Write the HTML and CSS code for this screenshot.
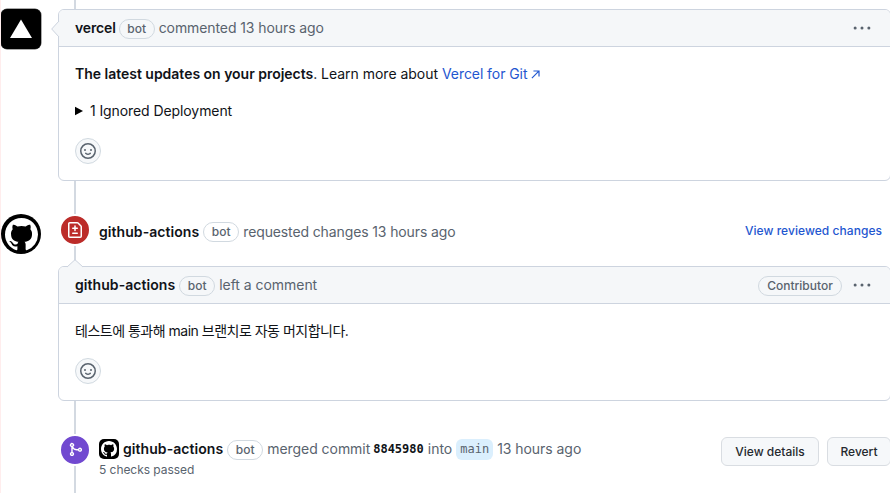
FILE: index.html
```html
<!DOCTYPE html>
<html lang="ko">
<head>
<meta charset="utf-8">
<title>Pull request timeline</title>
<link rel="stylesheet" href="styles.css">
</head>
<body>
<svg width="0" height="0" class="defs" aria-hidden="true">
  <symbol id="cat" viewBox="0 0 16 16"><path d="M8 0C3.58 0 0 3.58 0 8c0 3.54 2.29 6.53 5.47 7.59.4.07.55-.17.55-.38 0-.19-.01-.82-.01-1.49-2.01.37-2.53-.49-2.69-.94-.09-.23-.48-.94-.82-1.13-.28-.15-.68-.52-.01-.53.63-.01 1.08.58 1.23.82.72 1.21 1.87.87 2.33.66.07-.52.28-.87.51-1.07-1.78-.2-3.64-.89-3.64-3.95 0-.87.31-1.59.82-2.15-.08-.2-.36-1.02.08-2.12 0 0 .67-.21 2.2.82.64-.18 1.32-.27 2-.27s1.36.09 2 .27c1.53-1.04 2.2-.82 2.2-.82.44 1.1.16 1.92.08 2.12.51.56.82 1.27.82 2.15 0 3.07-1.87 3.75-3.65 3.95.29.25.54.73.54 1.48 0 1.07-.01 1.93-.01 2.2 0 .21.15.46.55.38A8.01 8.01 0 0 0 16 8c0-4.42-3.58-8-8-8z"/></symbol>
  <symbol id="smiley" viewBox="0 0 16 16"><path d="M8 0a8 8 0 1 1 0 16A8 8 0 0 1 8 0ZM1.5 8a6.5 6.5 0 1 0 13 0 6.5 6.5 0 0 0-13 0Zm3.82 1.636a.75.75 0 0 1 1.038.175l.007.009c.103.118.22.222.35.31.264.178.683.37 1.285.37.602 0 1.02-.192 1.285-.371.13-.088.247-.192.35-.31l.007-.008a.75.75 0 0 1 1.222.87l-.022-.015c.02.013.021.015.021.015v.001l-.001.002-.002.003-.005.007-.014.019a2.066 2.066 0 0 1-.184.213c-.16.166-.338.316-.53.445-.63.418-1.37.638-2.127.629-.946 0-1.652-.308-2.126-.63a3.331 3.331 0 0 1-.715-.657l-.014-.02-.005-.006-.002-.003v-.002h-.001l.613-.432-.614.43a.75.75 0 0 1 .183-1.044ZM12 7a1 1 0 1 1-2 0 1 1 0 0 1 2 0ZM5 8a1 1 0 1 1 0-2 1 1 0 0 1 0 2Z"/></symbol>
  <symbol id="dots" viewBox="0 0 16 16"><circle cx="1.9" cy="8" r="1.35"/><circle cx="8" cy="8" r="1.35"/><circle cx="14.1" cy="8" r="1.35"/></symbol>
</svg>
<main class="timeline">
  <section class="item">
    <span class="avatar vercel"><svg viewBox="0 0 40 40"><path d="M20 10.5 31 29H9Z" fill="#fff"/></svg></span>
    <article class="card first">
      <svg class="caret side" viewBox="0 0 8 16"><path d="M8 0 .7 8 8 16"/></svg>
      <header class="head"><b class="n-vercel">vercel</b><span class="label bot">bot</span><span class="muted t-commented">commented 13 hours ago</span><svg class="dots"><use href="#dots"/></svg></header>
      <div class="body">
        <p class="updates"><b>The latest updates on your projects</b>. Learn more about <a>Vercel for Git<svg class="arrow" viewBox="0 0 10 10"><path d="M1 9 8.7 1.3M2.7 1.1H8.9V7.3"/></svg></a></p>
        <p class="ignored"><svg class="tri" viewBox="0 0 8 10"><path d="M0 .8 8 5 0 9.2Z"/></svg><span>1 Ignored Deployment</span></p>
        <span class="react"><svg><use href="#smiley"/></svg></span>
      </div>
    </article>
  </section>
  <section class="event review">
    <span class="avatar round"><svg viewBox="0 0 16 16"><use href="#cat"/></svg></span>
    <span class="badge red"><svg viewBox="0 0 16 16"><path d="M1 1.75C1 .784 1.784 0 2.75 0h7.586c.464 0 .909.184 1.237.513l2.914 2.914c.329.328.513.773.513 1.237v9.586A1.75 1.75 0 0 1 13.25 16H2.75A1.75 1.75 0 0 1 1 14.25Zm1.75-.25a.25.25 0 0 0-.25.25v12.5c0 .138.112.25.25.25h10.5a.25.25 0 0 0 .25-.25V4.664a.25.25 0 0 0-.073-.177l-2.914-2.914a.25.25 0 0 0-.177-.073ZM8 3.25a.75.75 0 0 1 .75.75v1.5h1.5a.75.75 0 0 1 0 1.5h-1.5v1.5a.75.75 0 0 1-1.5 0V7h-1.5a.75.75 0 0 1 0-1.5h1.5V4A.75.75 0 0 1 8 3.25Zm-3 8a.75.75 0 0 1 .75-.75h4.5a.75.75 0 0 1 0 1.5h-4.5a.75.75 0 0 1-.75-.75Z"/></svg></span>
    <p class="line"><b class="n-gh">github-actions</b><span class="label bot">bot</span><span class="muted t-requested">requested changes 13 hours ago</span></p>
    <a class="viewlink">View reviewed changes</a>
  </section>
  <section class="item">
    <article class="card second">
      <svg class="caret up" viewBox="0 0 16 8"><path d="M0 8 8 .7 16 8"/></svg>
      <header class="head"><b class="n-gh">github-actions</b><span class="label bot">bot</span><span class="muted t-left">left a comment</span><span class="label contributor">Contributor</span><svg class="dots"><use href="#dots"/></svg></header>
      <div class="body">
        <p class="korean">테스트에 통과해 main 브랜치로 자동 머지합니다.</p>
        <span class="react"><svg><use href="#smiley"/></svg></span>
      </div>
    </article>
  </section>
  <section class="event merge">
    <span class="badge purple"><svg viewBox="0 0 16 16"><path d="M5.45 5.154A4.25 4.25 0 0 0 9.25 7.5h1.378a2.251 2.251 0 1 1 0 1.5H9.25A5.734 5.734 0 0 1 5 7.123v3.505a2.25 2.25 0 1 1-1.5 0V5.372a2.25 2.25 0 1 1 1.95-.218ZM4.25 13.5a.75.75 0 1 0 0-1.5.75.75 0 0 0 0 1.5Zm8.5-4.5a.75.75 0 1 0 0-1.5.75.75 0 0 0 0 1.5ZM5 3.25a.75.75 0 1 0 0 .005V3.25Z"/></svg></span>
    <div class="merged">
      <p class="line"><span class="mini"><svg viewBox="0 0 16 16"><use href="#cat"/></svg></span><b class="n-gh">github-actions</b><span class="label bot">bot</span><span class="muted t-merged">merged commit</span><code class="sha">8845980</code><span class="muted t-into">into</span><code class="branch">main</code><span class="muted t-ago">13 hours ago</span></p>
      <p class="checks">5 checks passed</p>
    </div>
    <div class="actions"><button class="details">View details</button><button class="revert">Revert</button></div>
  </section>
</main>
</body>
</html>
```

FILE: styles.css
```css
* { box-sizing: border-box; }
html, body { margin: 0; height: 493px; overflow: hidden; background: #fff; }
body { font: 14px/20px Inter, "Noto Sans CJK KR", sans-serif; color: #101318; }
p { margin: 0; }
b { font-weight: 600; }
a { color: #1f57d0; }
.defs { position: absolute; }

.timeline { position: relative; width: 891px; height: 493px; padding-top: 9px; border-left: 1px solid #ffeded; overflow: hidden; }
.timeline::before { content: ""; position: absolute; left: 73px; top: 0; width: 2px; height: 493px; background: #d3d9e1; }

.item { display: flex; position: relative; }
.avatar { flex: none; width: 40px; height: 40px; }
.avatar svg { display: block; width: 100%; height: 100%; }
.vercel { background: #000; border-radius: 6px; box-shadow: 0 0 0 .5px #555; }
.round { margin-top: 1px; padding: 3.5px; border-radius: 50%; background: #000; fill: #fff; }

.card { position: relative; flex: none; width: 833px; border: 1px solid #cdd4df; border-radius: 6px; background: #fff; }
.first { height: 172px; margin-left: 17px; }
.second { height: 135px; margin-left: 57px; }
.head { display: flex; align-items: center; height: 37px; padding: 0 19px 0 16px; background: #f5f7f9; border-bottom: 1px solid #cdd4df; border-radius: 5px 5px 0 0; }
.caret { position: absolute; fill: #f5f7f9; stroke: #cdd4df; stroke-width: 1; overflow: visible; }
.side { left: -8px; top: 11px; width: 8px; height: 16px; }
.up { left: 8px; top: -8px; width: 16px; height: 8px; }
.dots { width: 18px; height: 18px; margin: 0 0 1px auto; fill: #59636e; }

.muted { color: #59636e; white-space: nowrap; }
.label { flex: none; height: 20px; border: 1px solid #d1d9e0; border-radius: 10px; font-size: 12px; line-height: 18px; font-weight: 500; color: #59636e; text-align: center; }
.bot { width: 36px; margin: 1px 4px 0; }
.contributor { width: 84px; margin: 1px 11px 0 auto; }
.contributor + .dots { margin-left: 0; }

.n-vercel { letter-spacing: -.15px; }
.n-gh { letter-spacing: .06px; }
.t-commented { letter-spacing: -.09px; }
.t-requested { letter-spacing: -.12px; }
.t-left { letter-spacing: -.04px; }
.t-merged, .t-ago { letter-spacing: -.05px; }
.n-vercel + .bot { margin-left: 3px; }

.body { padding: 17px 16px 18px; }
.updates { letter-spacing: -.02px; white-space: nowrap; }
.updates a { letter-spacing: -.07px; }
.arrow { width: 9px; height: 9px; margin-left: 4px; fill: none; stroke: #1f57d0; stroke-width: 1.3; }
.ignored { display: flex; align-items: center; gap: 7px; margin-top: 17px; letter-spacing: -.09px; }
.korean { letter-spacing: -.5px; }
.tri { width: 8px; height: 10px; }
.react { display: flex; align-items: center; justify-content: center; width: 26px; height: 26px; margin-top: 17px; border: 1px solid #d1d9e0; border-radius: 50%; background: #f6f8fa; }
.react svg { width: 16px; height: 16px; fill: #59636e; }
.korean + .react { margin-top: 17px; }

.event { position: relative; display: flex; align-items: flex-start; }
.line { display: flex; align-items: center; height: 22px; }
.review { height: 85px; padding-top: 32px; }
.badge { flex: none; display: flex; align-items: center; justify-content: center; width: 32px; height: 32px; border: 2px solid #fff; border-radius: 50%; }
.badge svg { width: 16px; height: 16px; fill: #fff; }
.red { margin: .5px 8px 0 18px; background: #bc2c29; }
.review .line { margin-top: 7.5px; }
.review .bot, .merge .bot { margin-left: 4px; margin-right: 4px; }
.viewlink { margin: 8px 9px 0 auto; font-size: 12px; font-weight: 500; letter-spacing: .05px; white-space: nowrap; }

.merge { height: 92px; padding-top: 32px; }
.purple { margin: .5px 8px 0 58px; background: #7149d0; }
.purple svg { width: 15px; height: 15px; }
.merged { padding-top: 5px; }
.mini { flex: none; width: 20px; height: 20px; margin-right: 4px; padding: 2px; border-radius: 5px; background: #000; }
.mini svg { display: block; width: 16px; height: 16px; fill: #fff; }
.checks { padding-top: 1px; font-size: 12px; line-height: 18px; letter-spacing: -.05px; color: #59636e; }
code { font-family: "DejaVu Sans Mono", monospace; font-size: 12px; }
.sha { margin: 0 4px 0 3px; font-weight: 700; }
.branch { height: 21px; margin: 0 4px; padding: 0 4px; border-radius: 6px; background: #dbeffd; color: #59636e; line-height: 21px; }
.actions { display: flex; gap: 8px; margin: 4px 0 0 auto; }
button { height: 29px; padding: 0; border: 1px solid #d9dde2; border-radius: 6px; background: #f6f8fa; color: #25292e; font: 500 12px/20px Inter, sans-serif; }
.details { width: 98px; }
.revert { width: 64px; }
```
